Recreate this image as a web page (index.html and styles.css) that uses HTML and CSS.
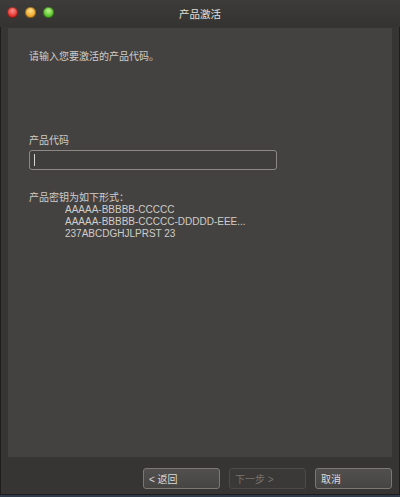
FILE: index.html
```html
<!DOCTYPE html>
<html lang="zh-CN">
<head>
    <meta charset="UTF-8">
    <title>产品激活</title>
    <link rel="stylesheet" href="styles.css">
</head>
<body>
    <div class="window">
        <div class="titlebar">
            <div class="lights">
                <span class="light red"></span>
                <span class="light yellow"></span>
                <span class="light green"></span>
            </div>
            <div class="title">产品激活</div>
        </div>

        <div class="panel">
            <p class="intro">请输入您要激活的产品代码。</p>

            <label class="field-label">产品代码</label>
            <div class="input"><span class="caret"></span></div>

            <div class="format">
                <div>产品密钥为如下形式：</div>
                <div class="sample">AAAAA-BBBBB-CCCCC</div>
                <div class="sample">AAAAA-BBBBB-CCCCC-DDDDD-EEE...</div>
                <div class="sample">237ABCDGHJLPRST 23</div>
            </div>
        </div>

        <div class="buttons">
            <button class="btn">&lt; 返回</button>
            <button class="btn disabled">下一步 &gt;</button>
            <button class="btn">取消</button>
        </div>
    </div>
</body>
</html>
```

FILE: styles.css
```css
html, body {
    margin: 0;
    padding: 0;
}

body {
    width: 400px;
    height: 497px;
    background: #2f3a4a;
    font-family: "Liberation Sans", "Noto Sans CJK SC", sans-serif;
    font-size: 10px;
    color: #cfcdca;
}

.window {
    height: 495px;
    background: #363533;
    box-shadow: inset 0 0 0 1px #1e1d1c;
    display: flex;
    flex-direction: column;
}

.titlebar {
    height: 27px;
    position: relative;
    display: flex;
    align-items: center;
    justify-content: center;
    background: linear-gradient(#3d3c3a, #343331);
}

.lights {
    position: absolute;
    left: 7px;
    top: 7px;
    display: flex;
    gap: 7px;
}

.light {
    width: 11px;
    height: 11px;
    border-radius: 50%;
    box-shadow: inset 0 0 0 1px rgba(0, 0, 0, 0.35);
}

.red { background: radial-gradient(circle at 50% 35%, #ff8f8a, #e0312a 60%, #a0201a); }
.yellow { background: radial-gradient(circle at 50% 35%, #ffe08a, #eda62a 60%, #a86d14); }
.green { background: radial-gradient(circle at 50% 35%, #b8f58a, #5ac12a 60%, #3a8418); }

.title {
    font-size: 10.5px;
    color: #e2e0dd;
}

.panel {
    margin: 1px 8px 0 8px;
    height: 429px;
    background: #444240;
    padding: 0 21px;
    box-sizing: border-box;
}

.intro {
    margin: 0;
    padding-top: 23px;
    line-height: 12px;
}

.field-label {
    display: block;
    margin-top: 72px;
    line-height: 12px;
}

.input {
    margin-top: 3px;
    width: 248px;
    height: 20px;
    box-sizing: border-box;
    border: 1px solid #8c8985;
    border-radius: 3px;
    background: #403e3c;
    padding: 3px 4px;
}

.caret {
    display: block;
    width: 1px;
    height: 12px;
    background: #d8d6d3;
}

.format {
    margin-top: 22px;
    line-height: 12px;
}

.sample {
    padding-left: 36px;
}

.buttons {
    display: flex;
    justify-content: flex-end;
    gap: 9px;
    padding: 11px 8px 0 0;
}

.btn {
    width: 77px;
    height: 21px;
    padding: 0 5px;
    text-align: left;
    font-family: inherit;
    font-size: 10px;
    color: #dddbd8;
    background: linear-gradient(#52504e, #474544);
    border: 1px solid #7a7774;
    border-radius: 3px;
}

.btn.disabled {
    color: #76736f;
    background: #3a3937;
    border-color: #4d4b49;
}
```
